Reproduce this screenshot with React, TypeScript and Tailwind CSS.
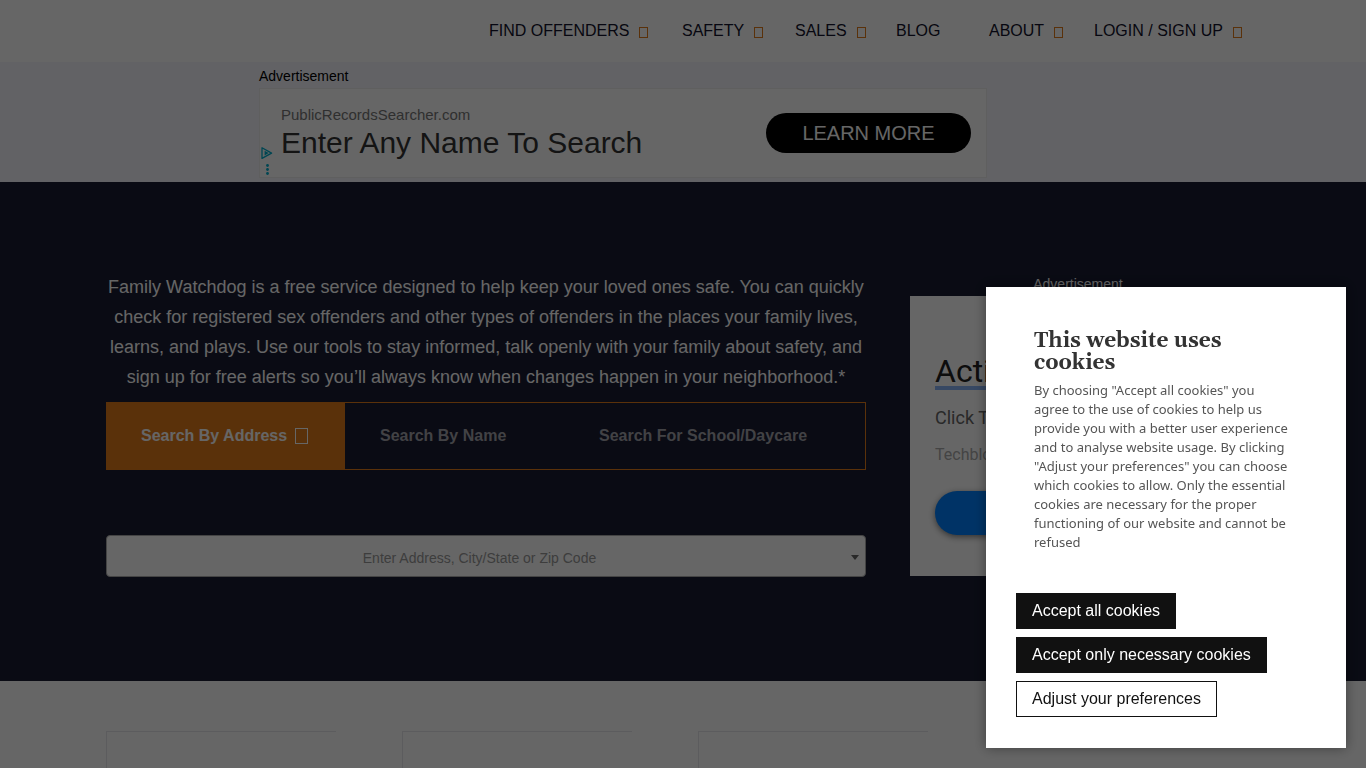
import React from "react";

const navItems = [
  { label: "FIND OFFENDERS", menu: true },
  { label: "SAFETY", menu: true },
  { label: "SALES", menu: true },
  { label: "BLOG", menu: false },
  { label: "ABOUT", menu: true },
  { label: "LOGIN / SIGN UP", menu: true },
];

function Header() {
  return (
    <header className="flex h-[62px] items-center justify-end bg-white pr-[120px]">
      <nav className="grid grid-cols-[193px_113px_101px_93px_105px_152px] text-base whitespace-nowrap text-[#12122b]">
        {navItems.map((item) => (
          <a key={item.label} href="#" className="flex items-center gap-[10px]">
            {item.label}
            {item.menu && <span className="mt-[3px] h-[11px] w-[9px] border border-[#e27b1b]" />}
          </a>
        ))}
      </nav>
    </header>
  );
}

function BannerAd() {
  return (
    <section className="h-[120px] bg-[#f5f5fd] pt-1 pr-[120px]">
      <div className="mx-auto w-[728px]">
        <p className="mb-[2px] text-sm leading-5 text-black">Advertisement</p>
        <div className="relative flex h-[90px] items-center justify-between border border-[#eeeeee] bg-white pr-[15px] pl-[21px]">
          <svg width="14" height="30" viewBox="0 0 14 30" fill="none" className="absolute bottom-0 left-0">
            <path d="M2 0.8v10.6l9.6-5.3z" stroke="#00aecd" strokeWidth="1.3" strokeLinejoin="round" />
            <path d="M4.6 3.8v4.6l4-2.3z" fill="#00aecd" />
            <circle cx="7.5" cy="18.5" r="1.4" fill="#00aecd" />
            <circle cx="7.5" cy="22.5" r="1.4" fill="#00aecd" />
            <circle cx="7.5" cy="26.5" r="1.4" fill="#00aecd" />
          </svg>
          <div>
            <p className="text-[15px] leading-5 text-[#777777]">PublicRecordsSearcher.com</p>
            <p className="text-[30px] leading-9 text-[#333333]">Enter Any Name To Search</p>
          </div>
          <button className="h-10 w-[205px] rounded-full bg-black text-xl text-white">LEARN MORE</button>
        </div>
      </div>
    </section>
  );
}

function SearchPanel() {
  return (
    <div className="w-[760px]">
      <p className="text-center text-lg leading-[30px] text-white">
        Family Watchdog is a free service designed to help keep your loved ones safe. You can quickly check for
        registered sex offenders and other types of offenders in the places your family lives, learns, and plays. Use
        our tools to stay informed, talk openly with your family about safety, and sign up for free alerts so you’ll
        always know when changes happen in your neighborhood.*
      </p>
      <div className="mt-[10px] flex h-[68px] border border-[#e27b1b] text-base font-bold text-[#a5a5ad]">
        <button className="flex w-[238px] items-center gap-2 bg-[#e27b1b] pl-[34px] text-white">
          Search By Address
          <span className="h-4 w-[13px] border border-white" />
        </button>
        <button className="w-[219px] pl-[35px] text-left">Search By Name</button>
        <button className="pl-[35px] text-left">Search For School/Daycare</button>
      </div>
      <div className="relative mt-[65px]">
        <select
          aria-label="Enter Address, City/State or Zip Code"
          className="block h-[42px] w-full appearance-none rounded border border-[#aaaaaa] bg-white pt-1 pr-[13px] text-center text-sm text-[#999999] [text-align-last:center]"
        >
          <option>Enter Address, City/State or Zip Code</option>
        </select>
        <span className="pointer-events-none absolute top-5 right-[7px] border-x-4 border-t-5 border-x-transparent border-t-[#666666]" />
      </div>
    </div>
  );
}

function SideAd() {
  return (
    <aside className="w-[336px]">
      <p className="text-center text-sm leading-6 text-white">Advertisement</p>
      <div className="h-[280px] bg-white px-[25px] pt-[55px] font-['Roboto',sans-serif]">
        <p className="text-[32px] leading-10 text-[#222222] underline decoration-[#8ab4f8] decoration-4 underline-offset-[4px] [text-decoration-skip-ink:none]">
          Acti
        </p>
        <p className="mt-[15px] text-lg leading-6 text-[#666666]">Click T</p>
        <p className="mt-[13px] text-base leading-6 text-[#aaaaaa]">Techblo</p>
        <button
          aria-label="Open"
          className="mt-6 block h-11 w-full rounded-full bg-[#0080ff] shadow-[0_2px_6px_rgba(0,0,0,0.5)]"
        />
      </div>
    </aside>
  );
}

function Hero() {
  return (
    <section className="flex h-[499px] justify-center bg-[#191c32] pt-[90px]">
      <div className="flex w-[1154px] gap-11">
        <SearchPanel />
        <SideAd />
      </div>
    </section>
  );
}

function Features() {
  return (
    <section className="flex grow justify-center overflow-hidden bg-white pt-[50px]">
      <div className="flex w-[1154px] gap-[66px]">
        <div className="w-[230px] border-t border-l border-[#e6e6ea]" />
        <div className="w-[230px] border-t border-l border-[#e6e6ea]" />
        <div className="w-[230px] border-t border-l border-[#e6e6ea]" />
      </div>
    </section>
  );
}

function CookieDialog() {
  return (
    <div className="fixed inset-0 flex items-end justify-end bg-black/60 p-5">
      <div
        role="dialog"
        aria-labelledby="cookie-title"
        className="w-[360px] bg-white px-[30px] pt-[43px] pb-[31px] shadow-[0_0_12px_rgba(0,0,0,0.4)]"
      >
        <div className="pr-[27px] pl-[18px]">
          <h2
            id="cookie-title"
            className="font-['Gelasio','Georgia','Liberation_Serif',serif] text-[21px] leading-[22px] font-bold text-[#333333]"
          >
            This website uses
            <br />
            cookies
          </h2>
          <p className="mt-[7px] font-['Noto_Sans',sans-serif] text-[13px] leading-[19px] text-[#555555]">
            By choosing "Accept all cookies" you agree to the use of cookies to help us provide you with a better user
            experience and to analyse website usage. By clicking "Adjust your preferences" you can choose which cookies
            to allow. Only the essential cookies are necessary for the proper functioning of our website and cannot be
            refused
          </p>
        </div>
        <div className="mt-[41px] flex flex-col items-start gap-2 text-base">
          <button className="h-9 border border-[#111111] bg-[#111111] px-[15px] text-white">Accept all cookies</button>
          <button className="h-9 border border-[#111111] bg-[#111111] px-[15px] text-white">
            Accept only necessary cookies
          </button>
          <button className="h-9 border border-[#111111] bg-white px-[15px] text-[#111111]">
            Adjust your preferences
          </button>
        </div>
      </div>
    </div>
  );
}

export default function App() {
  return (
    <div className="flex h-screen flex-col overflow-hidden bg-white font-['Liberation_Sans',Arial,sans-serif]">
      <Header />
      <BannerAd />
      <Hero />
      <Features />
      <CookieDialog />
    </div>
  );
}
